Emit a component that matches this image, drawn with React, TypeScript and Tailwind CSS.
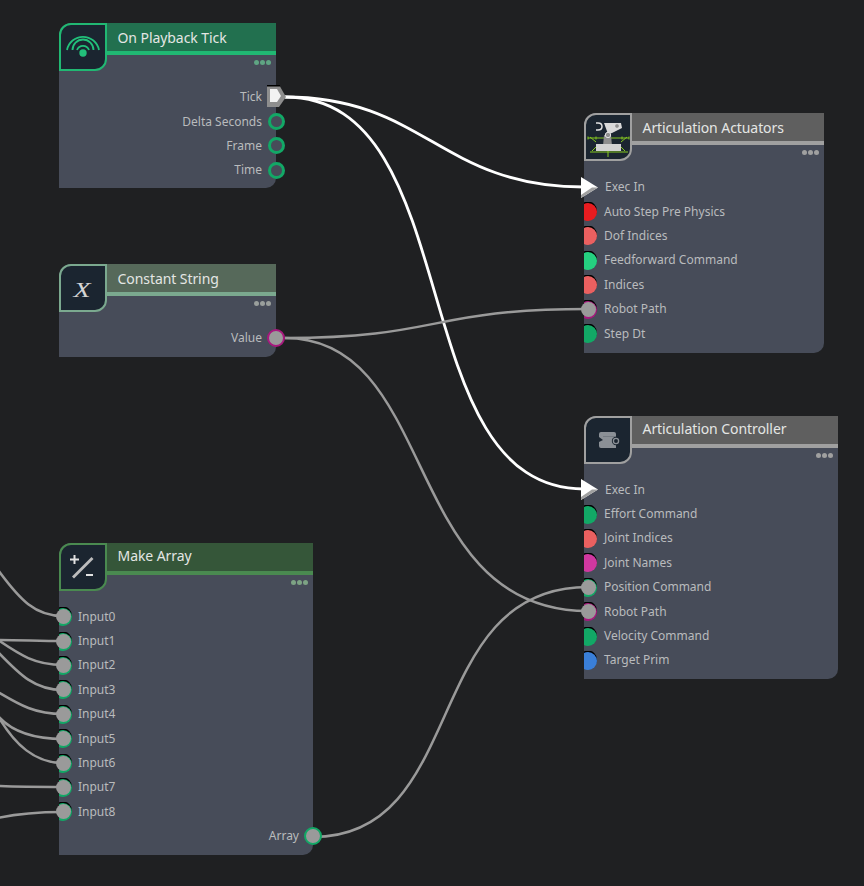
import { ReactNode } from "react";

const wires = [
  { d: "M285 97 C425 97 440 187 584 187", white: true },
  { d: "M285 97 C470 97 400 489 584 489", white: true },
  { d: "M285 338 C440 338 430 309 588 309", white: false },
  { d: "M285 338 C440 338 400 611 588 611", white: false },
  { d: "M313 837 C470 837 420 587 588 587", white: false },
  { d: "M-2 570 C20 600 35 616 63 616", white: false },
  { d: "M-2 640 C20 640 40 641 63 641", white: false },
  { d: "M-2 640 C20 655 35 665 63 665", white: false },
  { d: "M-2 652 C20 675 35 690 63 690", white: false },
  { d: "M-2 692 C20 705 35 714 63 714", white: false },
  { d: "M-2 716 C12 732 35 739 63 739", white: false },
  { d: "M-2 716 C15 745 35 763 63 763", white: false },
  { d: "M-2 786 C20 787 40 787 63 787", white: false },
  { d: "M-2 818 C20 813 40 812 63 812", white: false },
];

function WifiIcon() {
  return (
    <svg viewBox="2 2 44 44" className="h-full w-full" fill="none" stroke="#22c07a" strokeWidth="1.800">
      <path d="M8 27 A16.300 16.300 0 0 1 40 27" />
      <path d="M13.500 27 A10.500 10.500 0 0 1 34.500 27" />
      <path d="M18 27 A6.400 6.400 0 0 1 30 27" />
      <circle cx="24" cy="30" r="3.700" fill="#22c07a" stroke="none" />
    </svg>
  );
}

function PlusMinusIcon() {
  return (
    <svg viewBox="2 2 44 44" className="h-full w-full" fill="none" stroke="#e2e2e2" strokeWidth="2">
      <path d="M11 16.500 H20 M15.500 12 V21" />
      <path d="M14 34.500 L33.500 15" strokeWidth="2.800" stroke="#bdbdbd" />
      <path d="M27 32 H34" />
    </svg>
  );
}

function RobotIcon() {
  return (
    <svg viewBox="2 2 44 44" className="h-full w-full" fill="none">
      <g stroke="#86c820" strokeWidth="1">
        <path d="M4 25 H45 M6 39 H44 M24 37 V44" />
        <path d="M6 24 L12 29 M43 24 L37 29 M8 38 L14 32 M41 38 L35 32" />
        <path d="M4 23.500 V26.500 M12 23.500 V26.500 M38 23.500 V26.500 M45 23.500 V26.500" />
      </g>
      <path d="M20 22 H27 L28 33 H19 Z" fill="#8e8e8e" />
      <path d="M20 10 H37 L38 15 L28 20 L24 21 Z" fill="#d9d9d9" />
      <path d="M12 10 H14 Q18 10 18 13.500 Q18 17 14 17 H12" stroke="#e2e2e2" strokeWidth="1.500" />
      <circle cx="33" cy="13" r="2.400" fill="#8e8e8e" stroke="#e2e2e2" />
      <circle cx="24" cy="22" r="2.700" fill="#8e8e8e" stroke="#e2e2e2" />
      <rect x="12" y="31" width="25" height="7" fill="#d2d2d2" />
    </svg>
  );
}

function ControllerIcon() {
  return (
    <svg viewBox="2 2 44 44" className="h-full w-full" fill="none">
      <path d="M15 18 Q15 16 17 16 H30 Q32 16 32 18 V32 H17 Q15 32 15 30 V26 L19 24 L15 21 Z" fill="#8b9096" />
      <path d="M19 20.500 H32" stroke="#757b82" />
      <circle cx="32" cy="25" r="4.200" fill="#1b2530" />
      <circle cx="32" cy="25" r="2.600" stroke="#8b9096" strokeWidth="1.300" />
    </svg>
  );
}

function Dots({ className }: { className: string }) {
  return (
    <div className="flex h-[14px] items-center justify-end gap-px pr-[5px]">
      <span className={"h-[5px] w-[5px] rounded-full " + className} />
      <span className={"h-[5px] w-[5px] rounded-full " + className} />
      <span className={"h-[5px] w-[5px] rounded-full " + className} />
    </div>
  );
}

function Node({
  className,
  title,
  titleClass,
  icon,
  headerClass,
  iconBorder,
  dotClass,
  children,
}: {
  className: string;
  title: string;
  titleClass: string;
  icon: ReactNode;
  headerClass: string;
  iconBorder: string;
  dotClass: string;
  children: ReactNode;
}) {
  return (
    <div className={"absolute rounded-tl-[12px] rounded-br-[10px] bg-[#474c59] " + className}>
      <div className="flex h-[48px]">
        <div className={"h-[48px] w-[48px] shrink-0 rounded-tl-[12px] rounded-br-[12px] border-2 bg-[#1b2530] " + iconBorder}>
          {icon}
        </div>
        <div className="min-w-0 flex-1">
          <div
            className={
              "flex h-[32px] items-center border-b-4 pl-[10.500px] text-[14px] tracking-[-0.07px] text-[#e4e6e4] " +
              headerClass +
              " " +
              titleClass
            }
          >
            {title}
          </div>
          <Dots className={dotClass} />
        </div>
      </div>
      {children}
    </div>
  );
}

function OutRow({ label, children }: { label: string; children: ReactNode }) {
  return (
    <div className="flex h-[24.4px] items-center justify-end">
      <span className="mr-[5px] text-[12px] text-[#b9bbbd]">{label}</span>
      <span className="-mr-[9px] flex h-[18px] w-[18px] shrink-0 items-center justify-center">{children}</span>
    </div>
  );
}

function OutRing() {
  return <span className="h-[17px] w-[17px] rounded-full border-[3.5px] border-[#12a866] bg-[#474c59]" />;
}

function OutLinked({ ring }: { ring: string }) {
  return <span className={"h-[18px] w-[18px] rounded-full border-2 bg-[#9a9a9a] " + ring} />;
}

function InRow({
  label,
  color,
  linked,
  labelClass = "ml-[1px]",
}: {
  label: string;
  color: string;
  linked?: boolean;
  labelClass?: string;
}) {
  return (
    <div className="flex h-[24.4px] items-center">
      <span className="relative h-[19px] w-[19px] shrink-0">
        <span className="absolute left-0 top-0 h-[20px] w-[13px] overflow-hidden">
          <span className={"absolute -left-[5px] top-[1px] h-[18px] w-[18px] rounded-full shadow-[0_-1.5px_0_#000] " + color} />
        </span>
        {linked && <span className="absolute -left-[3.500px] top-[2px] h-[15px] w-[15px] rounded-full bg-[#9a9a9a]" />}
      </span>
      <span className={"text-[12px] text-[#b9bbbd] " + labelClass}>{label}</span>
    </div>
  );
}

function ExecRow() {
  return (
    <div className="flex h-[24.4px] items-center">
      <svg viewBox="0 0 17 21" className="-ml-[3px] h-[21px] w-[17px] shrink-0">
        <path d="M0 0 L17 10.500 L0 21 Z" fill="#ffffff" />
        <path d="M17 10.500 L0 21 L0 18 L11 10.500 Z" fill="#a0a0a0" />
      </svg>
      <span className="ml-[7px] text-[12px] text-[#b9bbbd]">Exec In</span>
    </div>
  );
}

function TickPort() {
  return (
    <svg viewBox="0 0 20 24" className="ml-[2px] h-[24px] w-[20px] shrink-0 overflow-visible">
      <path d="M0 0 H13 V2 H0 Z" fill="#000" />
      <path d="M0 1.500 H13 L19 12 L12 22 H0 Z" fill="#8e8e8e" />
      <path d="M3 4 H10 L14 11 L10 17 H3 Z" fill="#f2f2f2" />
    </svg>
  );
}

export default function App() {
  return (
    <div className="relative h-[886px] w-[864px] overflow-hidden bg-[#1f2022] font-['Noto_Sans','Open_Sans',sans-serif]">
      <svg viewBox="0 0 864 886" className="absolute inset-0 h-full w-full" fill="none">
        {wires.map((w) => (
          <path key={w.d} d={w.d} stroke={w.white ? "#ffffff" : "#9a9a9a"} strokeWidth={w.white ? "2.800" : "2.500"} />
        ))}
      </svg>

      <Node
        className="left-[59px] top-[23px] h-[165px] w-[217px]"
        title="On Playback Tick"
        titleClass="pt-[1px]"
        icon={<WifiIcon />}
        headerClass="bg-[#22704f] border-[#21b873]"
        iconBorder="border-[#21b873]"
        dotClass="bg-[#5fa583]"
      >
        <div className="mt-[14px]">
          <OutRow label="Tick">
            <TickPort />
          </OutRow>
          <OutRow label="Delta Seconds">
            <OutRing />
          </OutRow>
          <OutRow label="Frame">
            <OutRing />
          </OutRow>
          <OutRow label="Time">
            <OutRing />
          </OutRow>
        </div>
      </Node>

      <Node
        className="left-[59px] top-[264px] h-[93px] w-[217px]"
        title="Constant String"
        titleClass="pt-[1px]"
        icon={
          <div className="flex h-full w-full items-center justify-center pr-[2px] pt-[4px] font-['Liberation_Serif',serif] text-[20px] font-medium italic text-[#d4d4d4]">
            <span className="scale-x-[1.4]">X</span>
          </div>
        }
        headerClass="bg-[#56695a] border-[#7ba98f]"
        iconBorder="border-[#7ba98f]"
        dotClass="bg-[#9a9f9c]"
      >
        <div className="mt-[14px]">
          <OutRow label="Value">
            <OutLinked ring="border-[#a8187e]" />
          </OutRow>
        </div>
      </Node>

      <Node
        className="left-[59px] top-[543px] h-[312px] w-[254px]"
        title="Make Array"
        titleClass="pb-[3px]"
        icon={<PlusMinusIcon />}
        headerClass="bg-[#355639] border-[#4a8a50]"
        iconBorder="border-[#4a8a50]"
        dotClass="bg-[#7da384]"
      >
        <div className="mt-[13.500px]">
          {["Input0", "Input1", "Input2", "Input3", "Input4", "Input5", "Input6", "Input7", "Input8"].map((n) => (
            <InRow key={n} label={n} color="bg-[#12a866]" linked labelClass="ml-0" />
          ))}
        </div>
        <OutRow label="Array">
          <OutLinked ring="border-[#12a866]" />
        </OutRow>
      </Node>

      <Node
        className="left-[584px] top-[113px] h-[240px] w-[240px]"
        title="Articulation Actuators"
        titleClass="pt-[1px]"
        icon={<RobotIcon />}
        headerClass="bg-[#5f5f5f] border-[#a0a0a0]"
        iconBorder="border-[#a0a0a0]"
        dotClass="bg-[#a0a0a0]"
      >
        <div className="mt-[14px]">
          <ExecRow />
          <InRow label="Auto Step Pre Physics" color="bg-[#e81c20]" />
          <InRow label="Dof Indices" color="bg-[#ea6060]" />
          <InRow label="Feedforward Command" color="bg-[#25d080]" />
          <InRow label="Indices" color="bg-[#ea6060]" />
          <InRow label="Robot Path" color="bg-[#a8187e]" linked />
          <InRow label="Step Dt" color="bg-[#12a866]" />
        </div>
      </Node>

      <Node
        className="left-[584px] top-[416px] h-[263px] w-[254px]"
        title="Articulation Controller"
        titleClass="pb-[3px]"
        icon={<ControllerIcon />}
        headerClass="bg-[#5f5f5f] border-[#a0a0a0]"
        iconBorder="border-[#a0a0a0]"
        dotClass="bg-[#a0a0a0]"
      >
        <div className="mt-[13.500px]">
          <ExecRow />
          <InRow label="Effort Command" color="bg-[#12a866]" />
          <InRow label="Joint Indices" color="bg-[#ea6060]" />
          <InRow label="Joint Names" color="bg-[#d038a0]" />
          <InRow label="Position Command" color="bg-[#12a866]" linked />
          <InRow label="Robot Path" color="bg-[#a8187e]" linked />
          <InRow label="Velocity Command" color="bg-[#12a866]" />
          <InRow label="Target Prim" color="bg-[#3a7fd8]" />
        </div>
      </Node>
    </div>
  );
}
